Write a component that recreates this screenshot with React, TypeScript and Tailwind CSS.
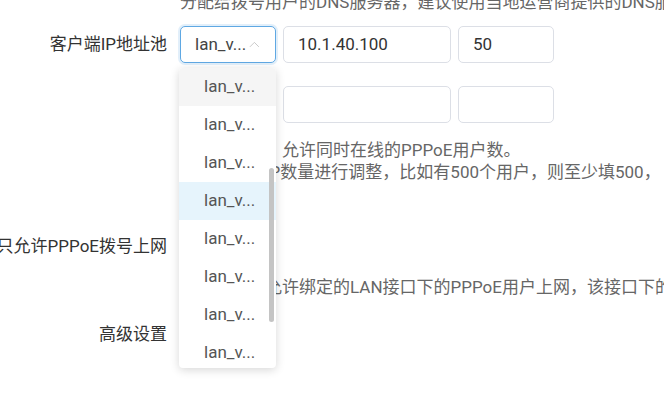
import { ChevronUp } from 'lucide-react';

const font = { fontFamily: 'Roboto, "Noto Sans CJK SC", sans-serif' };

function Label({ children }: { children: React.ReactNode }) {
  return (
    <div className="w-[167px] shrink-0 flex justify-end whitespace-nowrap text-[17px] text-[#333]">
      {children}
    </div>
  );
}

function Input({ value, w }: { value?: string; w: string }) {
  return (
    <div className={`${w} h-[37px] border border-[#dcdfe6] rounded-[5px] bg-white flex items-center px-[14px] text-[17px] text-[#333]`}>
      {value}
    </div>
  );
}

const items = ['lan_v...', 'lan_v...', 'lan_v...', 'lan_v...', 'lan_v...', 'lan_v...', 'lan_v...', 'lan_v...'];

export default function App() {
  return (
    <div className="w-[664px] h-[394px] overflow-hidden bg-white" style={font}>
      <div className="mt-[-9px] pl-[180px] whitespace-nowrap text-[17px] leading-[22px] text-[#666]">
        分配给拨号用户的DNS服务器，建议使用当地运营商提供的DNS服务器地址
      </div>

      {/* address pool row 1 */}
      <div className="mt-[13px] flex items-center gap-[13px] h-[37px]">
        <Label>客户端IP地址池</Label>
        <div className="flex gap-[7px]">
          <div className="relative">
            <div className="w-[96px] h-[37px] border border-[#5fa8e3] rounded-[5px] shadow-[0_0_0_2px_rgba(95,168,227,0.18)] bg-white flex items-center pl-[14px] pr-[12px] justify-between text-[17px] text-[#444]">
              <span>lan_v...</span>
              <ChevronUp size={17} strokeWidth={1.1} className="text-[#b8b8b8]" />
            </div>
            {/* dropdown */}
            <div className="absolute left-[-1px] top-[42px] z-10 w-[97px] h-[300px] bg-white rounded-[4px] shadow-[0_2px_10px_rgba(0,0,0,0.16)] overflow-hidden">
              {items.map((t, i) => (
                <div
                  key={i}
                  className={`h-[38px] flex items-center pl-[25px] text-[17px] text-[#555] ${i === 0 ? 'bg-[#f5f5f5]' : ''} ${i === 3 ? 'bg-[#e6f4fc]' : ''}`}
                >
                  {t}
                </div>
              ))}
              <div className="absolute right-[2px] top-[100px] w-[5px] h-[154px] rounded-full bg-[#c4c4c4]" />
            </div>
          </div>
          <div className="flex gap-[7px]">
            <Input w="w-[168px]" value="10.1.40.100" />
            <Input w="w-[96px]" value="50" />
          </div>
        </div>
      </div>

      {/* address pool row 2 */}
      <div className="mt-[23px] flex items-center gap-[13px] h-[37px]">
        <Label>{''}</Label>
        <div className="flex gap-[7px]">
          <Input w="w-[96px]" />
          <div className="flex gap-[7px]">
            <Input w="w-[168px]" />
            <Input w="w-[96px]" />
          </div>
        </div>
      </div>

      <div className="mt-[16px] pl-[180px] whitespace-nowrap text-[17px] leading-[22px] text-[#666]">
        <div>最大用户数，允许同时在线的PPPoE用户数。</div>
        <div>请根据用户IP数量进行调整，比如有500个用户，则至少填500，</div>
      </div>

      {/* pppoe only */}
      <div className="mt-[45px] flex items-center gap-[13px] h-[37px]">
        <Label>只允许PPPoE拨号上网</Label>
        <div className="w-[40px] h-[20px] rounded-full bg-[#dcdfe6]" />
      </div>
      <div className="mt-[11px] pl-[180px] whitespace-nowrap text-[17px] leading-[22px] text-[#666]">
        开启后，只允许绑定的LAN接口下的PPPoE用户上网，该接口下的其他用户无法上网。
      </div>

      <div className="mt-[18px] flex items-center gap-[13px] h-[37px]">
        <Label>高级设置</Label>
        <div className="w-[40px] h-[20px] rounded-full bg-[#dcdfe6]" />
      </div>
    </div>
  );
}
